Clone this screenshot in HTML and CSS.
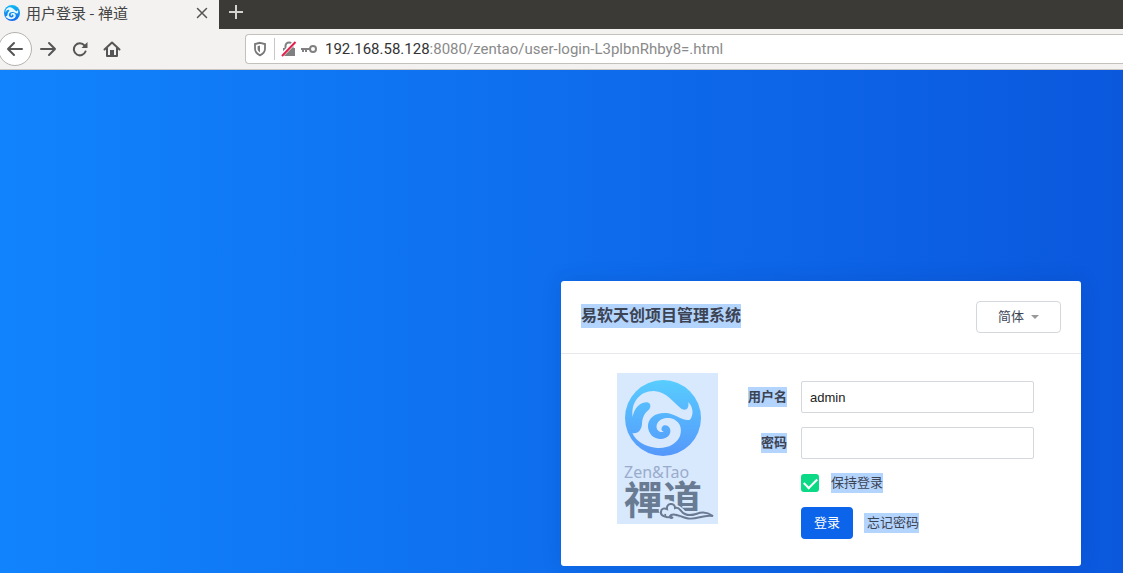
FILE: index.html
```
<!DOCTYPE html>
<html lang="zh-CN">
<head>
<meta charset="utf-8">
<title>用户登录 - 禅道</title>
<link rel="stylesheet" href="styles.css">
</head>
<body>
<svg class="defs" aria-hidden="true">
  <defs>
    <linearGradient id="sky" x1="0" y1="0" x2="0" y2="1"><stop offset="0" stop-color="#58cdff"/><stop offset="1" stop-color="#5598fb"/></linearGradient>
    <linearGradient id="tabsky" x1="0" y1="0" x2="0" y2="1"><stop offset="0" stop-color="#12b9f5"/><stop offset="1" stop-color="#1266ee"/></linearGradient>
    <path id="swirl" d="M38 126C32 82 60 47 102 48C142 50 158 82 184 101C198 109 208 101 205 81C221 98 221 121 210 134C188 139 166 117 140 114C110 111 82 127 84 156C86 177 101 192 122 192C143 191 155 176 150 161C145 149 132 148 127 155C122 162 125 168 132 170C118 175 107 164 110 150C115 133 134 126 153 130C179 137 188 160 180 183C169 209 141 222 106 218C75 214 48 200 37 174C53 178 64 166 66 147C67 130 72 116 85 106C95 96 92 84 82 82C61 81 43 98 38 126Z"/>
  </defs>
</svg>
<header class="browser">
  <div class="tabs">
    <div class="tab">
      <svg class="favicon" viewBox="15 15 228 228" aria-hidden="true"><circle cx="129" cy="129" r="114" fill="url(#tabsky)"/><use href="#swirl" fill="#e4f8ff"/></svg>
      <span class="tab-title">用户登录 - 禅道</span>
      <button class="icon-button" aria-label="关闭标签页"><svg width="12" height="12" viewBox="0 0 12 12"><path d="M1.500 1.500l9 9M10.500 1.500l-9 9" class="line thin"/></svg></button>
    </div>
    <button class="new-tab" aria-label="新标签页"><svg width="14" height="14" viewBox="0 0 14 14"><path d="M7 0v14M0 7h14"/></svg></button>
  </div>
  <div class="toolbar">
    <button class="icon-button back" aria-label="后退"><svg width="18" height="16" viewBox="0 0 18 16"><path d="M16 8H2M8 2L2 8l6 6" class="line"/></svg></button>
    <button class="icon-button" aria-label="前进"><svg width="18" height="16" viewBox="0 0 18 16"><path d="M2 8h14M10 2l6 6-6 6" class="line"/></svg></button>
    <button class="icon-button" aria-label="刷新"><svg width="18" height="16" viewBox="0 0 18 16"><path d="M14.500 10.500A6 6 0 1 1 13.500 4.500" class="line"/><path d="M16.500 1v6h-6z" fill="#555"/></svg></button>
    <button class="icon-button" aria-label="主页"><svg width="18" height="16" viewBox="0 0 18 16"><path d="M1.500 8.500L9 1.500l7.500 7M4 7v8h10V7" class="line"/><path d="M7 14V9h4v5" fill="#555"/></svg></button>
    <div class="address">
      <svg width="14" height="16" viewBox="0 0 14 16"><path d="M7 1.800L12 3v4.500c0 3.300-2 5.500-5 6.800-3-1.300-5-3.500-5-6.800V3z" fill="none" stroke="#777" stroke-width="1.800"/><path d="M7 4.600v6.800C5.400 10.400 4.600 9.200 4.600 7.500V5.200z" fill="#777"/></svg>
      <span class="divider"></span>
      <svg width="16" height="16" viewBox="0 0 16 16"><path d="M4.500 8V5a3.500 3.500 0 0 1 7 0v3" fill="none" stroke="#808080" stroke-width="2"/><path d="M2 7h12v8H2z" fill="#808080"/><path d="M1 14L14 1" stroke="#fff" stroke-width="4"/><path d="M1 15L14.500 1" stroke="#e2204c" stroke-width="2"/></svg>
      <svg width="16" height="16" viewBox="0 0 16 16"><circle cx="12" cy="8" r="3" fill="none" stroke="#808080" stroke-width="2"/><path d="M9 8H0M2 8v3M5 8v3" fill="none" stroke="#808080" stroke-width="2"/></svg>
      <span class="url"><b>192.168.58.128</b>:8080/zentao/user-login-L3plbnRhby8=.html</span>
    </div>
  </div>
</header>
<main class="page">
  <section class="card">
    <div class="card-head">
      <h1><mark>易软天创项目管理系统</mark></h1>
      <div class="language">
        <select aria-label="语言"><option>简体</option></select>
        <span class="caret"></span>
      </div>
    </div>
    <div class="card-body">
      <svg class="logo" viewBox="0 0 101 151" role="img" aria-label="Zen&amp;Tao 禪道">
        <circle cx="46" cy="45" r="38" fill="url(#sky)"/>
        <use href="#swirl" fill="#d8e8fd" transform="translate(3 2) scale(.3333)"/>
        <text x="7" y="105" class="logo-latin">Zen&amp;Tao</text>
        <text x="7" y="141" class="logo-han">禪道</text>
        <path d="M47 140c-5-1-4-7 1-6 0-6 9-6 10 0 6-1 7 6 12 8 8 3 14-5 26 2-11-3-16 3-26 1-8-1-12-6-17-5-3 1-2 4 1 4" fill="#d8e8fd" stroke="#d8e8fd" stroke-width="4"/>
        <path d="M55 144c-5 1-12-1-11-5 0-4 4-4 6-3-1-6 8-7 8-1 5-2 5 4 10 6 10 5 14-7 28 2-11-2-17 5-27 2-7-2-11-5-15-3-3 2 0 4 2 2" fill="none" stroke="#697b92" stroke-width="2"/>
      </svg>
      <form class="login">
        <label for="account"><mark>用户名</mark></label>
        <input class="field" id="account" type="text" value="admin">
        <label for="password"><mark>密码</mark></label>
        <input class="field" id="password" type="password">
        <div class="keep"><input id="keep" type="checkbox" checked><label for="keep"><mark>保持登录</mark></label></div>
        <div class="actions"><button class="submit" type="button">登录</button><a href="#forgot"><mark>忘记密码</mark></a></div>
      </form>
    </div>
  </section>
</main>
</body>
</html>
```
FILE: styles.css
```
* { box-sizing: border-box; }
body {
  margin: 0;
  min-height: 100vh;
  display: flex;
  flex-direction: column;
  font: 13px/20px "Liberation Sans", "Noto Sans CJK SC", sans-serif;
  color: #3c4353;
}
button, input, select { font: inherit; color: inherit; }
button { padding: 0; border: 0; background: none; }
svg { display: block; flex: none; }
mark { display: inline-block; background: #b3d4fd; color: inherit; }
.defs { position: absolute; width: 0; height: 0; }
.line { fill: none; stroke: #555; stroke-width: 2; stroke-linecap: round; stroke-linejoin: round; }
.line.thin { stroke-width: 1.5; }

.browser { background: #f3f2f0; border-bottom: 1px solid #c9c6c2; }
.tabs { display: flex; height: 29px; background: #3b3a36; }
.tab {
  display: flex;
  align-items: center;
  width: 219px;
  padding: 0 7px 4px 4px;
  background: #f3f2f0;
}
.favicon { width: 16px; height: 16px; }
.tab-title { flex: 1; margin-left: 6px; font: 15px/24px "Noto Sans CJK SC", sans-serif; color: #444; }
.icon-button { display: grid; place-items: center; width: 20px; height: 20px; }
.new-tab { display: grid; place-items: center; width: 34px; height: 24px; }
.new-tab path { stroke: #d5d3cf; stroke-width: 2; }
.toolbar { display: flex; align-items: center; gap: 12px; height: 40px; }
.toolbar .back {
  width: 34px;
  height: 34px;
  margin-left: -2px;
  margin-right: -6px;
  border: 1px solid #b5b2ae;
  border-radius: 50%;
  background: #fff;
}
.address {
  flex: 1;
  display: flex;
  align-items: center;
  gap: 4px;
  height: 30px;
  margin-left: 111px;
  padding-left: 7px;
  border: 1px solid #c4c1bd;
  border-right: 0;
  border-radius: 4px 0 0 4px;
  background: #fff;
}
.divider { width: 1px; height: 22px; margin: 0 2px 0 3px; background: #c9c7c4; }
.url { margin-left: 4px; font: 15px/20px Roboto, sans-serif; color: #8a8a8a; white-space: nowrap; }
.url b { font-weight: 400; color: #333; }

.page {
  flex: 1;
  display: flex;
  justify-content: flex-end;
  align-items: flex-start;
  padding: 211px 42px 7px;
  background: linear-gradient(90deg, #1183fd, #0b58dd);
}
.card { width: 520px; border-radius: 3px; background: #fff; box-shadow: 0 0 20px rgba(0, 40, 120, .15); }
.card-head {
  display: flex;
  justify-content: space-between;
  align-items: flex-start;
  height: 73px;
  padding: 20px;
  border-bottom: 1px solid #e6e8eb;
}
h1 { margin: 3px 0 0; font-size: 16px; line-height: 24px; }
h1 mark { display: block; }
.language { display: grid; align-items: center; width: 85px; height: 32px; }
.language > * { grid-area: 1 / 1; }
.language select {
  appearance: none;
  width: 100%;
  height: 100%;
  padding: 0 21px;
  border: 1px solid #d4d7db;
  border-radius: 4px;
  background: #fff;
}
.caret {
  justify-self: end;
  margin-right: 22px;
  border: 4px solid transparent;
  border-top-color: #999;
  border-bottom: 0;
  pointer-events: none;
}
.card-body { display: flex; gap: 30px; padding: 19px 47px 27px 56px; }
.logo { width: 101px; height: 151px; background: #d8e8fd; }
.logo-latin { font: 16px "Noto Sans", sans-serif; fill: #9aaccc; }
.logo-han { font: 700 39px "Noto Sans CJK TC", sans-serif; fill: #697b92; }
.logo { overflow: visible; }
.login {
  flex: 1;
  display: grid;
  grid-template-columns: 39px 1fr;
  column-gap: 14px;
  row-gap: 14px;
  align-items: center;
  align-content: start;
  padding-top: 8px;
}
.login > label { font-weight: 700; text-align: right; }
.login mark { display: block; }
.login > label mark { width: fit-content; margin-left: auto; }
.field {
  width: 100%;
  height: 32px;
  padding: 0 8px;
  border: 1px solid #d4d7db;
  border-radius: 2px;
  background: #fff;
  color: #222;
}
.keep, .actions { grid-column: 2; display: flex; align-items: center; }
.keep { gap: 12px; height: 20px; }
#keep {
  appearance: none;
  display: grid;
  place-items: center;
  width: 18px;
  height: 18px;
  margin: 0;
  border-radius: 3px;
  background: #0bd986;
}
#keep:checked::before {
  content: "";
  width: 11px;
  height: 6px;
  margin-bottom: 3px;
  border: solid #fff;
  border-width: 0 0 2px 2px;
  transform: rotate(-45deg);
}
.actions { gap: 11px; }
.submit { width: 52px; height: 32px; border-radius: 4px; background: #0c64eb; color: #fff; }
.actions a { color: #3c4353; text-decoration: none; }
.actions mark { padding-left: 3px; }
```
